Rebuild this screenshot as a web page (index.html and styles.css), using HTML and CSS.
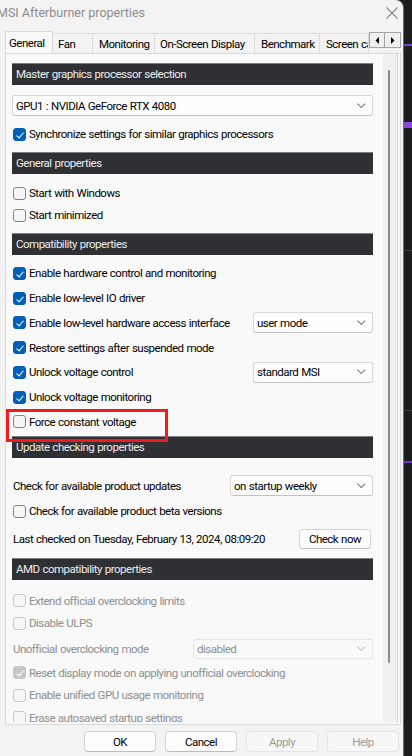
FILE: index.html
```html
<!DOCTYPE html>
<html lang="en">
<head>
<meta charset="utf-8">
<title>MSI Afterburner properties</title>
<link rel="stylesheet" href="styles.css">
</head>
<body>
<div class="desk">
  <div class="window">
    <div class="titlebar">
      <span class="title">MSI Afterburner properties</span>
      <svg class="close" width="12" height="12" viewBox="0 0 12 12"><path d="M0.5 0.5 L11.5 11.5 M11.5 0.5 L0.5 11.5" stroke="#8a8a8a" stroke-width="1.1" fill="none"/></svg>
    </div>

    <div class="tabstrip">
      <div class="tabs">
        <div class="tab active w-general">General</div>
        <div class="tab w-fan">Fan</div>
        <div class="tab w-mon">Monitoring</div>
        <div class="tab w-osd">On-Screen Display</div>
        <div class="tab w-bench">Benchmark</div>
        <div class="tab w-screen">Screen capture</div>
      </div>
      <div class="tab-arrows">
        <span class="arrow"><svg width="5" height="7" viewBox="0 0 5 7"><path d="M4 0 L0.5 3.5 L4 7 Z" fill="#000"/></svg></span>
        <span class="arrow"><svg width="5" height="7" viewBox="0 0 5 7"><path d="M1 0 L4.5 3.5 L1 7 Z" fill="#000"/></svg></span>
      </div>
    </div>

    <div class="page">
      <div class="scroller">
        <div class="content">
          <div class="head h1">Master graphics processor selection</div>
          <div class="select wide sel-gpu"><span>GPU1 : NVIDIA GeForce RTX 4080</span><i class="chev"></i></div>
          <label class="row r-sync"><span class="box on"></span>Synchronize settings for similar graphics processors</label>

          <div class="head h-gap">General properties</div>
          <label class="row r-gen first"><span class="box"></span>Start with Windows</label>
          <label class="row r-gen"><span class="box"></span>Start minimized</label>

          <div class="head h-gap">Compatibility properties</div>
          <div class="compat">
            <label class="row r-cmp"><span class="box on"></span>Enable hardware control and monitoring</label>
            <label class="row r-cmp"><span class="box on"></span>Enable low-level IO driver</label>
            <div class="row r-cmp split">
              <label class="lbl"><span class="box on"></span>Enable low-level hardware access interface</label>
              <div class="select narrow"><span>user mode</span><i class="chev"></i></div>
            </div>
            <label class="row r-cmp"><span class="box on"></span>Restore settings after suspended mode</label>
            <div class="row r-cmp split">
              <label class="lbl"><span class="box on"></span>Unlock voltage control</label>
              <div class="select narrow"><span>standard MSI</span><i class="chev"></i></div>
            </div>
            <label class="row r-cmp"><span class="box on"></span>Unlock voltage monitoring</label>
            <label class="row r-cmp marked"><span class="box"></span>Force constant voltage</label>
          </div>

          <div class="head h-upd">Update checking properties</div>
          <div class="row r-upd1 split">
            <span class="plain">Check for available product updates</span>
            <div class="select mid"><span>on startup weekly</span><i class="chev"></i></div>
          </div>
          <label class="row r-upd2"><span class="box"></span>Check for available product beta versions</label>
          <div class="row r-upd3 split">
            <span class="plain">Last checked on Tuesday, February 13, 2024, 08:09:20</span>
            <button class="btn small">Check now</button>
          </div>

          <div class="head h-amd">AMD compatibility properties</div>
          <div class="amd">
            <label class="row r-amd first"><span class="box off"></span>Extend official overclocking limits</label>
            <label class="row r-amd"><span class="box off"></span>Disable ULPS</label>
            <div class="row r-amd tall split">
              <span class="plain">Unofficial overclocking mode</span>
              <div class="select amdsel dis"><span>disabled</span><i class="chev"></i></div>
            </div>
            <label class="row r-amd"><span class="box on off"></span>Reset display mode on applying unofficial overclocking</label>
            <label class="row r-amd"><span class="box off"></span>Enable unified GPU usage monitoring</label>
            <label class="row r-amd"><span class="box off"></span>Erase autosaved startup settings</label>
          </div>
        </div>
        <div class="vscroll"><div class="thumb"></div></div>
      </div>
    </div>

    <div class="buttons">
      <button class="btn">OK</button>
      <button class="btn">Cancel</button>
      <button class="btn dis">Apply</button>
      <button class="btn dis">Help</button>
    </div>
  </div>
  <div class="backdrop"></div>
</div>
</body>
</html>
```

FILE: styles.css
```css
* { box-sizing: border-box; }

html, body {
  margin: 0;
  padding: 0;
  width: 412px;
  height: 756px;
  overflow: hidden;
  background: #1b1b1b;
}

body {
  font-family: Roboto, "Noto Sans", sans-serif;
  font-size: 11.5px;
  letter-spacing: -0.5px;
  word-spacing: 0.5px;
  color: #000;
}

.desk {
  display: flex;
  height: 756px;
}

/* dialog window */
.window {
  width: 404px;
  flex: none;
  height: 756px;
  background: #f3f3f3;
  border-top-right-radius: 8px;
  border-right: 1px solid #6a6a6a;
  display: flex;
  flex-direction: column;
  overflow: hidden;
}

/* dark application behind the dialog */
.backdrop {
  flex: 1;
  background:
    linear-gradient(#7b3fd1, #7b3fd1) 0 44px / 100% 2px no-repeat,
    linear-gradient(#8a48e0, #8a48e0) 0 122px / 100% 6px no-repeat,
    linear-gradient(#6b3ac0, #6b3ac0) 0 461px / 100% 2px no-repeat,
    linear-gradient(#3a3a3a, #3a3a3a) 0 250px / 100% 1px no-repeat,
    linear-gradient(#3a3a3a, #3a3a3a) 0 410px / 100% 1px no-repeat,
    #1d1d1d;
}

.titlebar {
  height: 31px;
  flex: none;
  display: flex;
  align-items: center;
  justify-content: space-between;
  padding: 0 5px 6px 0;
}

.title {
  margin-left: -3px;
  font-size: 12.5px;
  letter-spacing: 0;
  word-spacing: 0;
  color: #8c8c8c;
}

/* tab strip */
.tabstrip {
  height: 22px;
  flex: none;
  display: flex;
  align-items: flex-end;
  padding-left: 5px;
}

.tabs {
  display: flex;
  align-items: flex-end;
  width: 364px;
  overflow: hidden;
  white-space: nowrap;
}

.tab {
  flex: none;
  height: 20px;
  padding: 1px 0 0 5px;
  border: 1px solid #dadada;
  border-bottom: none;
  border-left: none;
  background: #f3f3f3;
  line-height: 18px;
  overflow: hidden;
}

.tab.active {
  border-left: 1px solid #dadada;
  background: #f9f9f9;
  padding-left: 3px;
  padding-top: 2px;
  position: relative;
  z-index: 1;
  margin-bottom: -1px;
  height: 23px;
}

.w-general { width: 48px; }
.w-fan { width: 40px; }
.w-mon { width: 62px; padding-left: 6px; }
.w-osd { width: 100px; }
.w-bench { width: 65px; padding-left: 6px; }
.w-screen { width: 49px; padding-left: 6px; }

.tab-arrows {
  display: flex;
  align-self: flex-start;
  margin-top: 1px;
}

.arrow {
  width: 16px;
  height: 16px;
  border: 1px solid #a3a3a3;
  background: #f0f0f0;
  display: flex;
  align-items: center;
  justify-content: center;
}

.arrow + .arrow { border-left: none; }

/* property page */
.page {
  flex: none;
  height: 672px;
  margin: 0 2px 0 5px;
  border: 1px solid #dadada;
  background: #f9f9f9;
  display: flex;
  padding-bottom: 2px;
}

.scroller {
  flex: 1;
  display: flex;
  overflow: hidden;
}

.content {
  width: 377px;
  flex: none;
  height: 668px;
  overflow: hidden;
  padding: 9px 0 0 6px;
}

.vscroll {
  width: 15px;
  flex: none;
  background: #f0f0f0;
  border-right: 1px solid #d6d6d6;
  padding: 16px 0 0 5px;
  height: 668px;
}

.thumb {
  width: 2px;
  height: 593px;
  background: #8b8b8b;
  border-radius: 1px;
}

/* section header bars */
.head {
  width: 361px;
  height: 22px;
  background: #2f3034;
  border-top: 1px solid #7d7e82;
  color: #ececec;
  padding-left: 4px;
  line-height: 20px;
  white-space: nowrap;
}

.h-gap { margin-top: 7px; }
.h-upd { margin-top: 2px; }
.h-amd { margin-top: 9px; }

/* rows */
.row {
  display: flex;
  align-items: center;
  white-space: nowrap;
  position: relative;
}

.row.split { justify-content: space-between; width: 361px; }

.lbl { display: flex; align-items: center; }

.plain { padding-left: 1px; }

.r-sync { height: 22px; margin-top: 7px; }
.r-gen { height: 22px; }
.r-gen.first { margin-top: 8px; }

.compat { padding-top: 6px; }
.r-cmp { height: 24.75px; }

.r-upd1 { height: 23px; margin-top: 16px; }
.r-upd2 { height: 22px; margin-top: 3px; }
.r-upd3 { height: 21px; margin-top: 6px; }

.amd { color: #8f8f8f; padding-top: 9px; }
.r-amd { height: 22.5px; }
.r-amd.tall { height: 25px; margin-top: 2px; }

/* highlight frame around one option */
.marked::after {
  content: "";
  position: absolute;
  left: -6px;
  top: -1px;
  width: 156px;
  height: 27px;
  border: 3px solid #ee1c1c;
}

/* checkboxes */
.box {
  width: 13px;
  height: 13px;
  flex: none;
  margin: 0 3px 0 1px;
  border: 1px solid #858585;
  border-radius: 3px;
  background: #f5f5f5;
  position: relative;
}

.box.on {
  background: #005fb8;
  border-color: #005fb8;
}

.box.on::after {
  content: "";
  position: absolute;
  left: 3.5px;
  top: 2px;
  width: 3px;
  height: 6px;
  border: solid #fff;
  border-width: 0 1.3px 1.3px 0;
  transform: rotate(40deg);
}

.box.off {
  border-color: #c9c9c9;
  background: #f6f6f6;
}

.box.on.off {
  background: #c6c6c6;
  border-color: #c6c6c6;
}

/* drop-down lists */
.select {
  height: 21px;
  background: #fdfdfd;
  border: 1px solid #d6d6d6;
  border-bottom-color: #c2c2c2;
  border-radius: 3px;
  display: flex;
  align-items: center;
  justify-content: space-between;
  padding: 0 7px 0 3px;
  white-space: nowrap;
}

.select.wide { width: 361px; margin-top: 10px; }
.select.narrow { width: 120px; }
.select.mid { width: 143px; }
.select.amdsel { width: 180px; height: 20px; }

.select.dis {
  background: #f9f9f9;
  border-color: #e6e6e6;
  color: #8f8f8f;
}

.chev {
  width: 6px;
  height: 6px;
  border: solid #6e6e6e;
  border-width: 0 1px 1px 0;
  transform: rotate(45deg) translate(-2px, -1px);
}

.select.dis .chev { border-color: #c4c4c4; }

/* push buttons */
.btn {
  font: inherit;
  letter-spacing: inherit;
  word-spacing: inherit;
  color: #000;
  width: 72px;
  height: 21px;
  background: #fdfdfd;
  border: 1px solid #d3d3d3;
  border-bottom-color: #bdbdbd;
  border-radius: 4px;
  padding: 0;
}

.btn.small { width: 72px; height: 20px; margin-right: 2px; }

.btn.dis {
  color: #9a9a9a;
  background: #f8f8f8;
  border-color: #e5e5e5;
}

.buttons {
  flex: 1;
  display: flex;
  justify-content: flex-end;
  gap: 9px;
  padding: 6px 4px 0 0;
}
```
